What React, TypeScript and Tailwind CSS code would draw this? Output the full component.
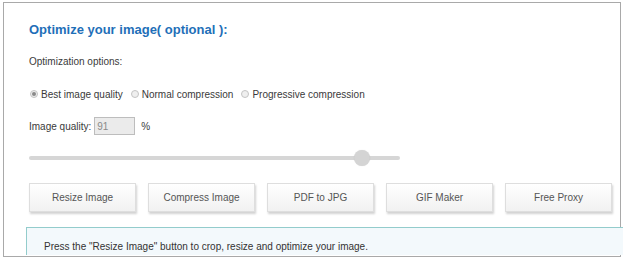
import React from 'react';

const options = [
  { label: 'Best image quality', checked: true },
  { label: 'Normal compression', checked: false },
  { label: 'Progressive compression', checked: false },
];

const tools = ['Resize Image', 'Compress Image', 'PDF to JPG', 'GIF Maker', 'Free Proxy'];

const Radio: React.FC<{ checked: boolean }> = ({ checked }) => (
  <span className="flex h-[8px] w-[8px] shrink-0 items-center justify-center rounded-full border border-[#c4c4c4] bg-[#efefef]">
    {checked && <span className="h-[4px] w-[4px] rounded-full bg-[#8a8a8a]" />}
  </span>
);

export default function App() {
  const quality = 91;

  return (
    <div className="h-[258px] w-[623px] overflow-hidden bg-white font-['Liberation_Sans',Arial,sans-serif] text-[10px] text-[#3a3a3a]">
      <div className="ml-[3px] mt-[2px] h-[255px] w-[618px] border border-[#a9a9a9] pl-[25px] pt-[17px]">
        <h2 className="h-[20px] text-[13px] font-bold leading-[20px] text-[#1f6fb8]">
          Optimize your image( optional ):
        </h2>

        <p className="mt-[12px] h-[20px] leading-[20px]">Optimization options:</p>

        <div className="mt-[12px] flex h-[20px] items-center gap-[8px] pl-[1px]">
          {options.map((o) => (
            <label key={o.label} className="flex items-center gap-[3px]">
              <Radio checked={o.checked} />
              <span>{o.label}</span>
            </label>
          ))}
        </div>

        <div className="mt-[12px] flex h-[20px] items-center">
          <span>Image quality:</span>
          <span className="ml-[3px] flex h-[18px] w-[41px] items-center border border-[#bdbdbd] bg-[#ebebeb] pl-[2px] text-[#8a8a8a]">
            {quality}
          </span>
          <span className="ml-[6px]">%</span>
        </div>

        <div className="mt-[12px] flex h-[20px] items-center">
          <div className="relative h-[4px] w-[371px] rounded-full bg-[#d6d6d6]">
            <span
              className="absolute top-1/2 h-[16px] w-[16px] -translate-y-1/2 rounded-full bg-[#d4d4d4] shadow-[0_0_1px_rgba(0,0,0,0.15)]"
              style={{ left: `${(quality / 100) * 371 - 13}px` }}
            />
          </div>
        </div>

        <div className="mt-[15px] flex gap-[12px]">
          {tools.map((t) => (
            <button
              key={t}
              className="h-[29px] w-[107px] border border-[#dedede] bg-gradient-to-b from-white to-[#f1f1f1] text-[10px] text-[#555] shadow-[1px_2px_2px_rgba(0,0,0,0.18)]"
            >
              {t}
            </button>
          ))}
        </div>

        <div className="-ml-[3px] mt-[15px] h-[28px] w-[600px] border border-b-0 border-[#93cccc] bg-[#f3f9fc] pl-[17px] pt-[13px] leading-[12px] text-[#333]">
          Press the "Resize Image" button to crop, resize and optimize your image.
        </div>
      </div>
    </div>
  );
}
